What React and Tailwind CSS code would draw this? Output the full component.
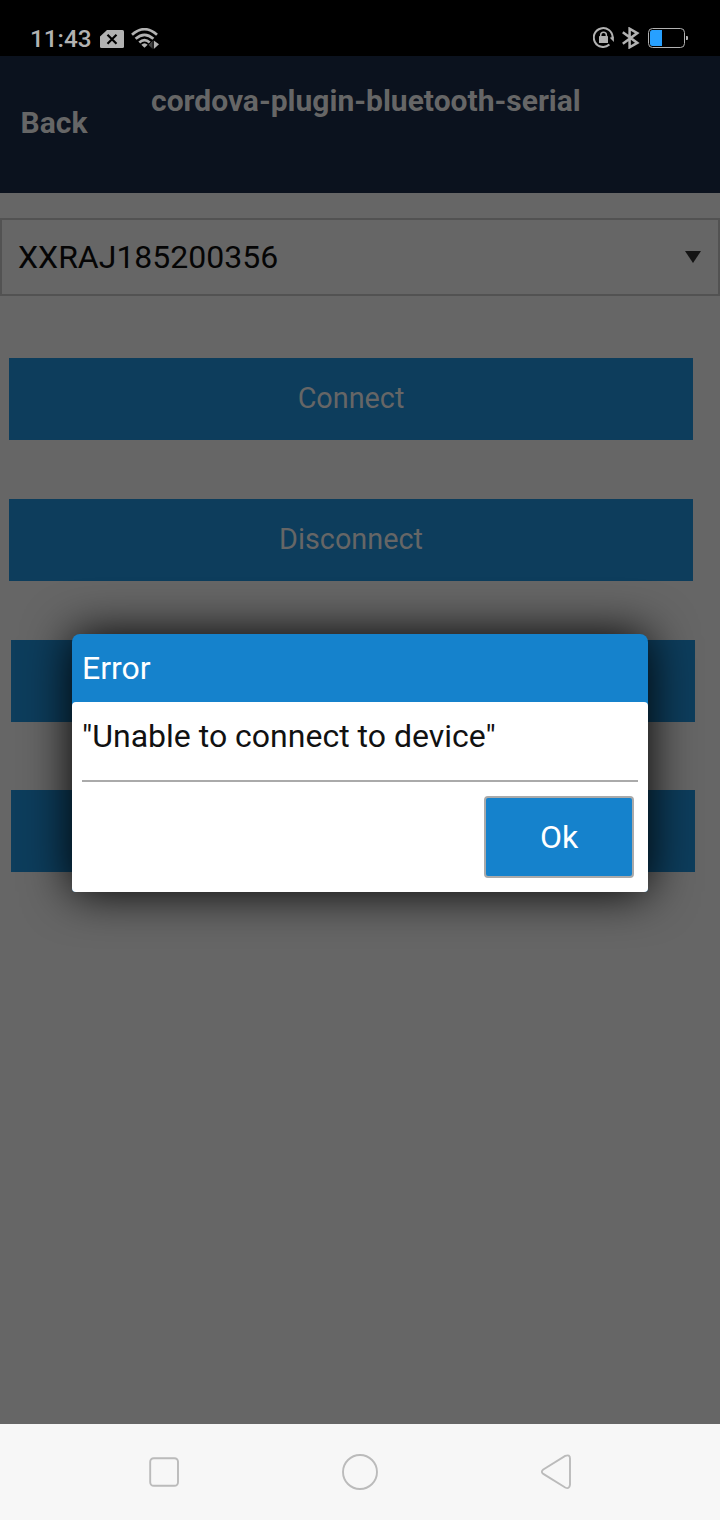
function NoSimIcon() {
  return (
    <svg className="block" width="24" height="18" viewBox="0 0 24 18">
      <path d="M7 0H22.5Q24 0 24 1.5V16.5Q24 18 22.5 18H1.5Q0 18 0 16.5V6.5Z" fill="#b2b2b2" />
      <path d="M7.5 4.800l9 9M16.500 4.800l-9 9" stroke="#000" strokeWidth="2.200" />
    </svg>
  );
}

function WifiIcon() {
  return (
    <svg className="block" width="28" height="22" viewBox="0 0 28 22">
      <g fill="none" stroke="#b2b2b2" strokeWidth="2.700">
        <path d="M1 6.800Q13.500 -4.400 26 6.800" />
        <path d="M4.600 10.800Q13.500 2.800 22.400 10.800" />
        <path d="M8.300 14.600Q13.500 9.800 18.700 14.600" />
      </g>
      <path d="M10.300 16.800Q13.500 13.800 16.700 16.800L13.500 19.800Z" fill="#b2b2b2" />
      <path d="M22 12V21.500L17 17Z" fill="#444" stroke="#000" strokeWidth="0.800" />
      <path d="M22.800 12.500L28 16.300L22.800 21Z" fill="#b2b2b2" />
    </svg>
  );
}

function RotationLockIcon() {
  return (
    <svg className="block" width="22" height="22" viewBox="0 0 22 22">
      <path d="M16.400 17.600A9.400 9.400 0 1 1 19.600 10.400" fill="none" stroke="#b2b2b2" strokeWidth="2" />
      <path d="M16.800 10.700L20.900 9.500V15Z" fill="#b2b2b2" />
      <rect x="6" y="9" width="9" height="7" rx="0.600" fill="#b2b2b2" />
      <path d="M7.700 9.500V8A2.850 2.850 0 0 1 13.400 8V9.500" fill="none" stroke="#b2b2b2" strokeWidth="1.500" />
    </svg>
  );
}

function BluetoothIcon() {
  return (
    <svg className="block" width="18" height="22" viewBox="0 0 18 22">
      <path d="M0.800 5.200L15.300 15.900L7.600 20.300V1.700L15.300 6.100L0.800 16.800" fill="none" stroke="#b2b2b2" strokeWidth="2.500" />
    </svg>
  );
}

function BatteryIcon() {
  return (
    <svg className="block" width="40" height="20" viewBox="0 0 40 20">
      <rect x="0.500" y="0.500" width="36" height="19" rx="4" fill="none" stroke="#b2b2b2" />
      <path d="M14 2H4.500Q2 2 2 4.500V15.500Q2 18 4.500 18H14Z" fill="#27a0ff" />
      <path d="M38 8H39Q40 8 40 9V11Q40 12 39 12H38Z" fill="#b2b2b2" />
    </svg>
  );
}

function StatusBar() {
  return (
    <div className="flex h-14 shrink-0 justify-between bg-black">
      <div className="flex pl-[30px]">
        <span className="w-[70px] pt-[25px] text-[24.3px] leading-7 font-medium text-[#b2b2b2]">11:43</span>
        <span className="pt-[30px]"><NoSimIcon /></span>
        <span className="pt-7 pl-[7px]"><WifiIcon /></span>
      </div>
      <div className="flex pr-8">
        <span className="pt-[27px]"><RotationLockIcon /></span>
        <span className="pt-[27px] pl-[7px]"><BluetoothIcon /></span>
        <span className="pt-7 pl-2"><BatteryIcon /></span>
      </div>
    </div>
  );
}

function ActionButton({ children, className }) {
  return (
    <button className={`block h-[82px] w-[684px] shrink-0 bg-[#0d3d5c] text-[28.8px] text-[#666] ${className}`}>
      {children}
    </button>
  );
}

function ErrorDialog() {
  return (
    <div role="dialog" className="absolute top-[634px] left-[72px] h-[258px] w-[576px] rounded-t-lg rounded-b bg-[#1582cc] text-[32px] shadow-[0_0_48px_#000]">
      <h2 className="h-[68px] pt-[14px] pl-2.5 leading-10 text-white">Error</h2>
      <div className="flex h-[190px] flex-col rounded bg-white px-2.5">
        <p className="h-20 border-b-2 border-[#aaa] pt-[14px] leading-10 text-[#111]">"Unable to connect to device"</p>
        <button className="mt-[14px] mr-1 h-[82px] w-[150px] self-end rounded border-2 border-[#aaa] bg-[#1582cc] text-white">Ok</button>
      </div>
    </div>
  );
}

function NavigationBar() {
  return (
    <div className="flex h-24 shrink-0 items-center justify-between bg-[#f7f7f7] px-[145px]">
      <svg className="block" width="38" height="38" viewBox="0 0 38 38" fill="none" stroke="#bbb" strokeWidth="1.900">
        <rect x="5.200" y="5.200" width="27.800" height="27.600" rx="3.500" />
      </svg>
      <svg className="block" width="38" height="38" viewBox="0 0 38 38" fill="none" stroke="#bbb" strokeWidth="1.900">
        <circle cx="19" cy="19" r="17" />
      </svg>
      <svg className="block" width="38" height="38" viewBox="0 0 38 38" fill="none" stroke="#bbb" strokeWidth="1.900">
        <path d="M6.300 16.500L28.200 2.900Q33 1 33 5.500V31.700Q32.500 36.500 28.200 34.500L6.300 20.900Q3.400 18.700 6.300 16.500Z" />
      </svg>
    </div>
  );
}

export default function App() {
  return (
    <div className="relative flex h-[1520px] w-[720px] flex-col overflow-hidden bg-[#666] font-[Roboto,sans-serif]">
      <StatusBar />
      <header className="flex h-[137px] shrink-0 bg-[#0b121e] text-[30px] leading-9 font-bold text-[#666]">
        <span className="w-[151px] pt-[49px] pl-[20.6px]">Back</span>
        <h1 className="pt-[27px]">cordova-plugin-bluetooth-serial</h1>
      </header>
      <main className="flex flex-1 flex-col">
        <div className="mt-[25px] flex h-[78px] shrink-0 items-center justify-between border-2 border-[#525252] pr-[17px] pl-4 text-[32px] text-[#050505]">
          <span>XXRAJ185200356</span>
          <svg className="block" width="16" height="12" viewBox="0 0 16 12">
            <path d="M0 0H16L8 12Z" fill="#141414" />
          </svg>
        </div>
        <ActionButton className="mt-[62px] ml-[9px]">Connect</ActionButton>
        <ActionButton className="mt-[59px] ml-[9px]">Disconnect</ActionButton>
        <ActionButton className="mt-[59px] ml-[11px]" />
        <ActionButton className="mt-[68px] ml-[11px]" />
      </main>
      <NavigationBar />
      <ErrorDialog />
    </div>
  );
}
